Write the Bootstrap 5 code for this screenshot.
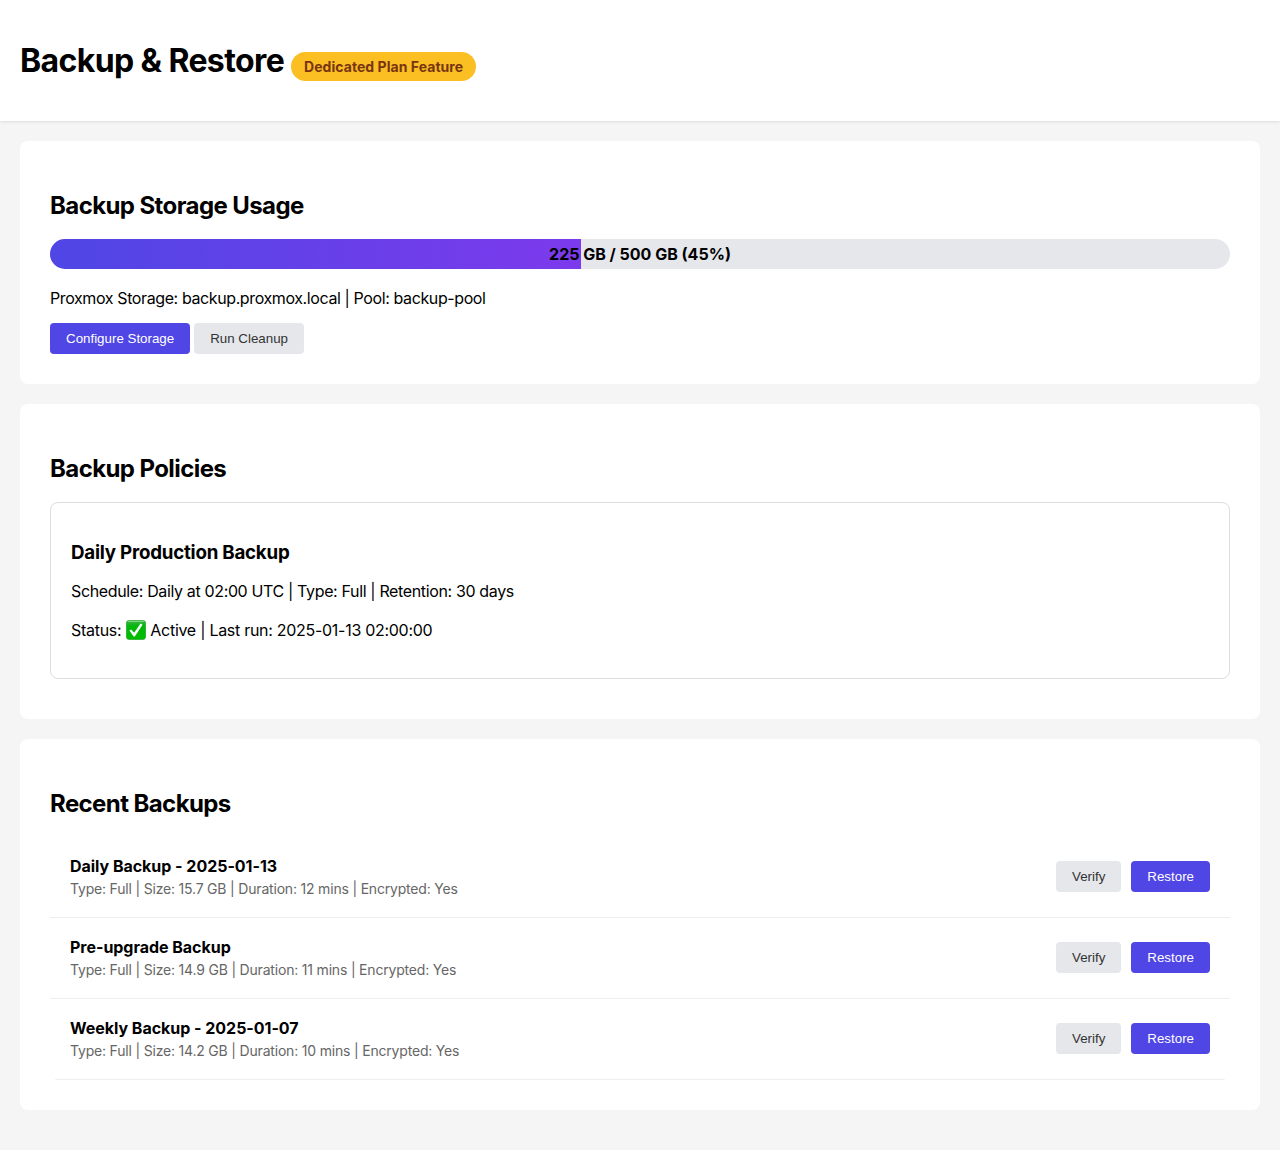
<!DOCTYPE html>
<html lang="en">
<head>
<meta charset="utf-8">
<meta name="viewport" content="width=device-width, initial-scale=1">
<title>Backup &amp; Restore</title>
<link href="https://cdn.jsdelivr.net/npm/bootstrap@5.3.0/dist/css/bootstrap.min.css" rel="stylesheet">
<style>
body{font-family:Inter,"Liberation Sans",sans-serif;font-size:16px;line-height:18px;color:#000;background:#f5f5f5;min-height:1150px}
h1,h2,h3{font-weight:700;white-space:nowrap;color:#000}
.page-head{height:121px;padding:42px 20px 0;box-shadow:0 1px 3px rgba(0,0,0,.1)}
h1{font-size:32px;line-height:38px;letter-spacing:-.61px}
.plan-pill{width:185px;margin:10px 0 0 7px;height:29px;line-height:30px;font-size:14px;font-weight:700;letter-spacing:.05px;color:#78350f;background:#fbbf24}
.page-body{padding:20px;gap:20px}
.panel{padding:51px 30px 30px;border-radius:8px}
h2{font-size:24px;line-height:28px;margin-bottom:19px;letter-spacing:-.59px}
h3{font-size:18.72px;line-height:22px;margin-bottom:18px;letter-spacing:-.22px}
.usage{height:30px;border-radius:15px;background:#e5e7eb;margin-bottom:20px}
.usage-fill{background:linear-gradient(90deg,#4f46e5,#7c3aed)}
.store-line{letter-spacing:-.395px}
.plan-line{letter-spacing:-.36px}
.state-line{height:20px;margin-top:20px;letter-spacing:-.285px}
.act{font-family:"Liberation Sans",Arial,sans-serif;font-size:13.333px;line-height:15px;padding:8px 16px;border:0;border-radius:4px}
.act-main,.act-main:hover{background:#4f46e5;color:#fff}
.act-alt,.act-alt:hover{background:#e5e7eb;color:#333}
.policy{height:177px;border:1px solid #ddd;border-radius:8px;padding:39px 20px 0;margin-bottom:10px}
.tick{width:20px;height:20px;margin:0 4px 0 5px}
.backups{border-radius:8px}
.backup-row{height:81px;padding:0 20px;border-bottom:1px solid #eee}
.backup-name{letter-spacing:-.03px}
.meta{font-size:14px;line-height:17px;color:#666;margin-top:5px;letter-spacing:-.19px}
.row-acts{gap:10px;margin-bottom:1px}
</style>
</head>
<body>
<header class="page-head bg-white d-flex align-items-start">
  <h1 class="mb-0">Backup &amp; Restore</h1>
  <span class="plan-pill rounded-pill text-center text-nowrap">Dedicated Plan Feature</span>
</header>
<main class="page-body d-flex flex-column">
  <section class="panel bg-white">
    <h2>Backup Storage Usage</h2>
    <div class="usage position-relative overflow-hidden">
      <div class="usage-fill h-100" style="width:45%"></div>
      <div class="position-absolute top-0 start-0 w-100 h-100 d-flex align-items-center justify-content-center fw-bold">225 GB / 500 GB (45%)</div>
    </div>
    <p class="store-line mb-3">Proxmox Storage: backup.proxmox.local | Pool: backup-pool</p>
    <div class="d-flex gap-1">
      <button type="button" class="btn act act-main">Configure Storage</button>
      <button type="button" class="btn act act-alt">Run Cleanup</button>
    </div>
  </section>

  <section class="panel bg-white">
    <h2>Backup Policies</h2>
    <div class="policy">
      <h3>Daily Production Backup</h3>
      <p class="plan-line mb-0">Schedule: Daily at 02:00 UTC | Type: Full | Retention: 30 days</p>
      <p class="state-line d-flex align-items-center mb-0">
        <span>Status:</span>
        <svg class="tick flex-shrink-0" viewBox="0 0 20 20" role="img" aria-label="Done">
          <defs><linearGradient id="tickFill" x1="0" y1="0" x2="0" y2="1"><stop offset="0" stop-color="#3fbf45"/><stop offset=".16" stop-color="#1fb42a"/><stop offset=".3" stop-color="#00b80a"/><stop offset="1" stop-color="#00bd00"/></linearGradient></defs>
          <rect x=".4" y=".4" width="19.2" height="19.2" rx="3" fill="url(#tickFill)" stroke="#25a52c" stroke-width=".8"/>
          <path d="M2.5 1.4H17.5" stroke="#8fdc8f" stroke-width=".9" stroke-linecap="round"/>
          <path d="M3.4 10.6 5.1 9.4 8.1 12.7 14.6 3.6 16.5 4.7 8.8 16.4H7.7Z" fill="#fff"/>
        </svg>
        <span>Active | Last run: 2025-01-13 02:00:00</span>
      </p>
    </div>
  </section>

  <section class="panel bg-white">
    <h2>Recent Backups</h2>
    <div class="backups overflow-hidden">
      <div class="backup-row d-flex align-items-center justify-content-between">
        <div>
          <div class="backup-name fw-bold">Daily Backup - 2025-01-13</div>
          <div class="meta">Type: Full | Size: 15.7 GB | Duration: 12 mins | Encrypted: Yes</div>
        </div>
        <div class="row-acts d-flex">
          <button type="button" class="btn act act-alt">Verify</button>
          <button type="button" class="btn act act-main">Restore</button>
        </div>
      </div>
      <div class="backup-row d-flex align-items-center justify-content-between">
        <div>
          <div class="backup-name fw-bold">Pre-upgrade Backup</div>
          <div class="meta">Type: Full | Size: 14.9 GB | Duration: 11 mins | Encrypted: Yes</div>
        </div>
        <div class="row-acts d-flex">
          <button type="button" class="btn act act-alt">Verify</button>
          <button type="button" class="btn act act-main">Restore</button>
        </div>
      </div>
      <div class="backup-row d-flex align-items-center justify-content-between">
        <div>
          <div class="backup-name fw-bold">Weekly Backup - 2025-01-07</div>
          <div class="meta">Type: Full | Size: 14.2 GB | Duration: 10 mins | Encrypted: Yes</div>
        </div>
        <div class="row-acts d-flex">
          <button type="button" class="btn act act-alt">Verify</button>
          <button type="button" class="btn act act-main">Restore</button>
        </div>
      </div>
    </div>
  </section>
</main>
<script src="https://cdn.jsdelivr.net/npm/bootstrap@5.3.0/dist/js/bootstrap.bundle.min.js"></script>
</body>
</html>
